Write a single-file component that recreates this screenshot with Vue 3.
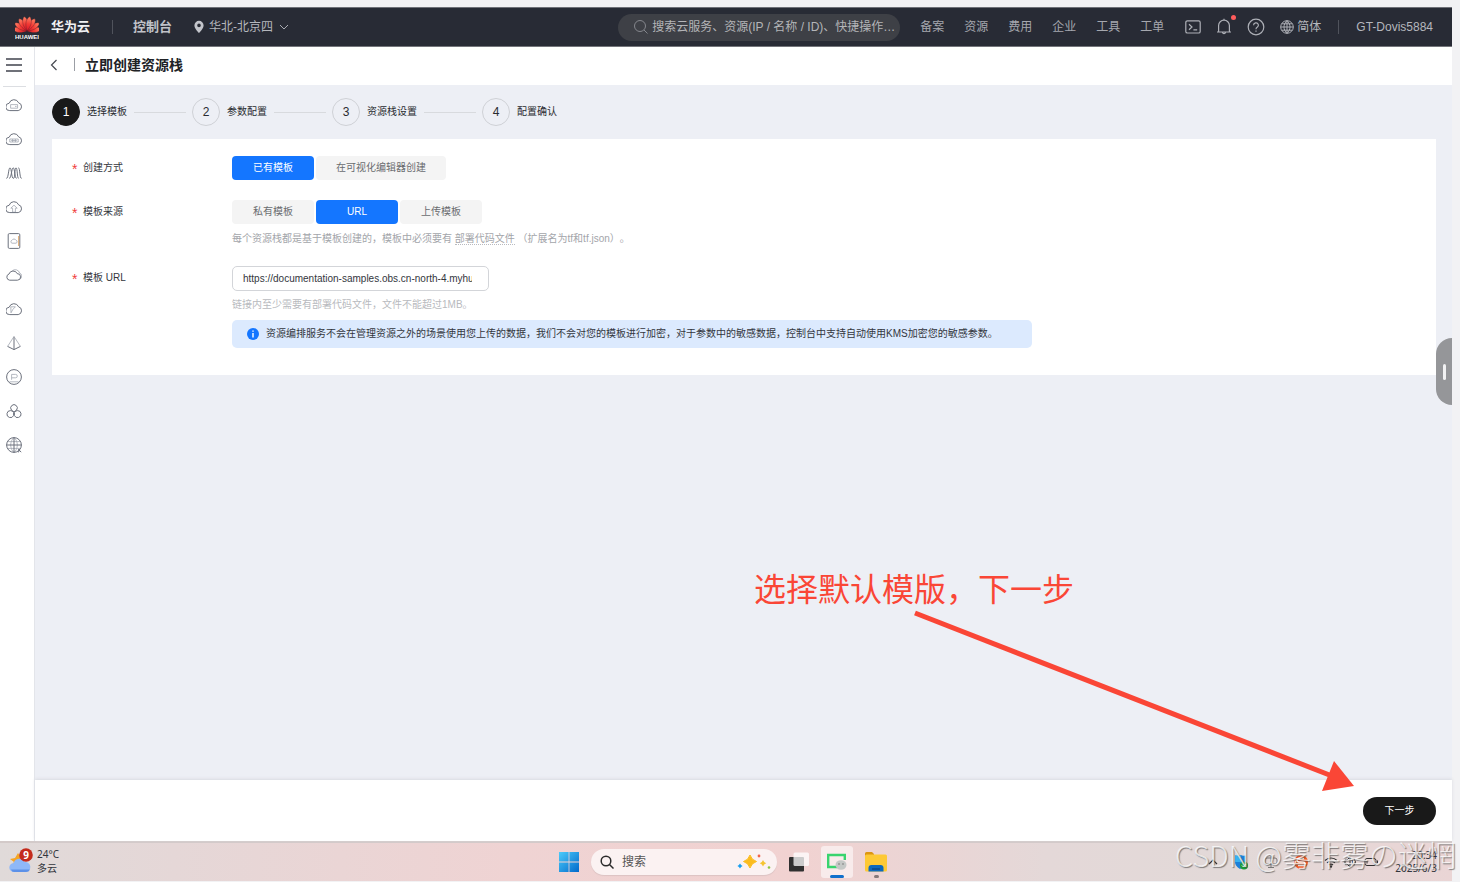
<script setup>
import { ref } from 'vue'

const navLinks = ['备案', '资源', '费用', '企业', '工具', '工单']
const steps = ['选择模板', '参数配置', '资源栈设置', '配置确认']
const createModes = ['已有模板', '在可视化编辑器创建']
const sources = ['私有模板', 'URL', '上传模板']

const cloud = 'M3.8 13.6A3.7 3.7 0 0 1 3.2 6.2 5 5 0 0 1 12.6 5.8 4 4 0 0 1 12.2 13.6Z'
const services = [
  { name: '弹性云服务器', paths: [cloud], faint: ['M4.6 7.6h7v3.6H4.600zM9 9.400h1.600'] },
  { name: '裸金属服务器', paths: [cloud], faint: ['M3.800 8h8.400v3H3.800zM5.200 9.500h5.600M6.600 8v3M9.400 8v3'] },
  { name: '弹性伸缩', paths: ['M.4 13.400C2.600 13.400 2.400 2.800 4 2.800S5.400 13.400 7.400 13.400 8.400 2.800 10 2.800 11 13.400 12.600 13.400', 'M3.200 13.400C5.400 13.400 5.600 2.800 7.200 2.800S8.600 13.400 10.600 13.400M12.400 2.800c1.800 0 1 10.600 3.200 10.600'], faint: [] },
  { name: '云备份', paths: [cloud], faint: ['M8 6.200 11.200 9.200H9.400v4H6.600v-4H4.800z'] },
  { name: '云硬盘', paths: ['M3.400.6h9.200a1.200 1.200 0 0 1 1.200 1.200v12.400a1.200 1.200 0 0 1-1.200 1.200H3.400a1.200 1.200 0 0 1-1.200-1.200V1.800A1.200 1.200 0 0 1 3.400.6z'], faint: ['M6 10.200a1.500 1.500 0 0 1 0-2.900 2.200 2.200 0 0 1 4 0 1.500 1.500 0 0 1 0 2.900z'], warm: 'M12.600 3v10' },
  { name: '虚拟私有云', paths: ['M3.600 13.200A3.200 3.200 0 0 1 3 7 4.400 4.400 0 0 1 11.200 6.600 3.300 3.300 0 0 1 11.400 13.200Z'], faint: ['M6.400 3.600A4.600 4.600 0 0 1 13.600 6 3.400 3.400 0 0 1 14.200 12'] },
  { name: '内容分发', paths: [cloud], faint: ['M4.800 5.800h4.600L7 8.200 5 11.800z'] },
  { name: '弹性负载均衡', paths: ['M8 1.400v13', 'M1.600 11.400 8 14.600l6.400-3.200'], faint: ['M7.400 2.400 1.600 11.400M8.600 2.400l5.800 9'] },
  { name: '弹性公网', paths: ['M8 .6a7.400 7.400 0 1 1 0 14.800A7.400 7.400 0 0 1 8 .6z'], faint: ['M5.600 10.800V5.400h4a1.700 1.700 0 0 1 0 3.400h-4M3.400 12.800h9.200'] },
  { name: '容器', paths: ['M5.400 7A3.300 3.300 0 1 1 10.600 7L8 9z', 'M4.400 7.600a3.500 3.500 0 1 0 3.200 5V9.400A3.600 3.600 0 0 0 4.400 7.600z', 'M11.600 7.600a3.500 3.500 0 1 1-3.200 5V9.400a3.600 3.600 0 0 1 3.200-1.800z'], faint: [] },
  { name: '域名', paths: ['M8 .6a7.400 7.400 0 1 1 0 14.800A7.400 7.400 0 0 1 8 .6z', 'M8 .6v14.800M.6 8h14.800', 'M12.200 12l3 3.200M12.400 15.400l1.200-3.200'], faint: ['M8 .6C3.600 4 3.600 12 8 15.400M8 .6c4.400 3.400 4.400 11.400 0 14.800M2 4.600h12M2 11.400h12'] }
]

const petals = [-82, 82, -57, 57, -33, 33, -11, 11]
const createMode = ref('已有模板')
const source = ref('URL')
const url = ref('https://documentation-samples.obs.cn-north-4.myhuaweicloud.com')
</script>

<template>
  <div class="page" lang="zh-CN">
    <header class="topbar">
      <a class="brand" href="#">
        <svg class="logo" width="24" height="26" viewBox="0 0 24 26" aria-label="HUAWEI">
          <defs>
            <linearGradient id="petal" x1="0" y1="0" x2="0" y2="1">
              <stop offset="0" stop-color="#ff8466" />
              <stop offset=".5" stop-color="#f23a35" />
              <stop offset="1" stop-color="#dc1428" />
            </linearGradient>
          </defs>
          <path v-for="p in petals" :key="p" d="M12 17C8.400 11 7.600 6 10.600 2Q12 0 13.400 2C16.400 6 15.600 11 12 17Z" fill="url(#petal)" stroke="#4a2029" stroke-width=".4" :transform="`rotate(${p} 12 17) translate(2.400 1.700) scale(.8 .9)`" />
          <text x="12" y="25" text-anchor="middle" class="logo-text">HUAWEI</text>
        </svg>
        <span>华为云</span>
      </a>
      <span class="rule brand-rule"></span>
      <a class="console" href="#">控制台</a>
      <button class="region" type="button">
        <svg width="10" height="14" viewBox="0 0 10 14"><path fill-rule="evenodd" d="M5 .8a4.600 4.600 0 0 1 4.600 4.600C9.600 8.500 5 13 5 13S.4 8.500.4 5.400A4.600 4.600 0 0 1 5 .8zM5 3.600a1.800 1.800 0 1 0 0 3.600 1.800 1.800 0 0 0 0-3.600z" fill="#c3c5cb" /></svg>
        <span>华北-北京四</span>
        <svg width="10" height="8" viewBox="0 0 10 8"><path d="M1 2l4 4 4-4" fill="none" stroke="#a9abb2" /></svg>
      </button>
      <label class="search">
        <svg width="16" height="16" viewBox="0 0 16 16" fill="none" stroke="#85878d"><circle cx="7" cy="7" r="5.500" /><path d="M11 11l3.500 3.500" /></svg>
        <input type="text" aria-label="搜索" placeholder="搜索云服务、资源(IP / 名称 / ID)、快捷操作…" />
      </label>
      <nav class="links">
        <a v-for="l in navLinks" :key="l" href="#">{{ l }}</a>
      </nav>
      <div class="tools">
        <button type="button" aria-label="命令行">
          <svg width="16" height="16" viewBox="0 0 16 16" fill="none" stroke="#aeb0b7" stroke-width="1.200"><rect x=".8" y="1.800" width="14.400" height="12.200" rx="1.600" /><path d="M4 5.200l3 2.800-3 2.800M8.400 10.800h3.800" /></svg>
        </button>
        <button type="button" class="bell" aria-label="消息">
          <svg width="16" height="18" viewBox="0 0 16 18" fill="none" stroke="#aeb0b7" stroke-width="1.200"><path d="M1 14h14M2.600 14V7.600a5.400 5.400 0 0 1 10.800 0V14M8 2.200V.8M6.400 14.400a1.700 1.700 0 0 0 3.200 0" /></svg>
          <i class="dot"></i>
        </button>
        <button type="button" aria-label="帮助">
          <svg width="18" height="18" viewBox="0 0 18 18" fill="none" stroke="#aeb0b7" stroke-width="1.200"><circle cx="9" cy="9" r="7.800" /><path d="M6.600 7.300a2.400 2.400 0 1 1 3.600 2Q9 10 9 11.200M9 12.400v1.400" /></svg>
        </button>
        <button type="button" class="lang">
          <svg width="14" height="14" viewBox="0 0 14 14" fill="none" stroke="#aeb0b7"><circle cx="7" cy="7" r="6.300" /><path d="M7 .7v12.600M.7 7h12.600M7 .7C3 4 3 10 7 13.300M7 .7c4 3.300 4 9.300 0 12.600M1.700 3.800h10.600M1.700 10.200h10.600" /></svg>
          <span>简体</span>
        </button>
      </div>
      <span class="rule"></span>
      <a class="user" href="#">GT-Dovis5884</a>
    </header>

    <div class="body">
      <aside class="side">
        <button type="button" class="burger" aria-label="菜单">
          <svg width="16" height="16" viewBox="0 0 16 16"><path d="M0 2h16M0 8h16M0 14h16" stroke="#40434d" stroke-width="1.600" /></svg>
        </button>
        <a v-for="s in services" :key="s.name" href="#" :aria-label="s.name">
          <svg width="16" height="16" viewBox="0 0 16 16" fill="none" stroke-linejoin="round">
            <path v-for="d in s.faint" :key="d" :d="d" stroke="#a2a7b1" stroke-width=".8" />
            <path v-for="d in s.paths" :key="d" :d="d" stroke="#6c717d" />
            <path v-if="s.warm" :d="s.warm" stroke="#e0ad74" />
          </svg>
        </a>
      </aside>

      <div class="content">
        <div class="titlebar">
          <button type="button" aria-label="返回">
            <svg width="8" height="12" viewBox="0 0 8 12"><path d="M6.500 1l-5 5 5 5" fill="none" stroke="#454850" stroke-width="1.200" /></svg>
          </button>
          <span class="title-rule"></span>
          <h1>立即创建资源栈</h1>
        </div>

        <main class="main">
          <ol class="steps">
            <li v-for="(s, i) in steps" :key="s" :class="{ active: i === 0 }">
              <b>{{ i + 1 }}</b><span>{{ s }}</span>
            </li>
          </ol>

          <form class="card" @submit.prevent>
            <div class="row">
              <span id="mode" class="label"><i>*</i>创建方式</span>
              <div class="segments" role="group" aria-labelledby="mode">
                <button v-for="m in createModes" :key="m" type="button" :class="{ on: m === createMode }" @click="createMode = m">{{ m }}</button>
              </div>
            </div>
            <div class="row">
              <span id="source" class="label"><i>*</i>模板来源</span>
              <div>
                <div class="segments" role="group" aria-labelledby="source">
                  <button v-for="m in sources" :key="m" type="button" :class="{ on: m === source }" @click="source = m">{{ m }}</button>
                </div>
                <p class="hint">每个资源栈都是基于模板创建的，模板中必须要有 <a href="#">部署代码文件</a> （扩展名为tf和tf.json）。</p>
              </div>
            </div>
            <div class="row">
              <label class="label" for="url"><i>*</i>模板 URL</label>
              <div>
                <input id="url" v-model="url" class="url" type="text" />
                <p class="hint light">链接内至少需要有部署代码文件，文件不能超过1MB。</p>
                <p class="notice">
                  <svg width="12" height="12" viewBox="0 0 12 12"><circle cx="6" cy="6" r="6" fill="#1476ff" /><path d="M6 2.400v1.400M6 5v4.400" stroke="#fff" stroke-width="1.400" /></svg>
                  <span>资源编排服务不会在管理资源之外的场景使用您上传的数据，我们不会对您的模板进行加密，对于参数中的敏感数据，控制台中支持自动使用KMS加密您的敏感参数。</span>
                </p>
              </div>
            </div>
          </form>
        </main>

        <footer class="actions">
          <button type="button">下一步</button>
        </footer>
      </div>
      <button type="button" class="handle" aria-label="展开"><i></i></button>
    </div>

    <footer class="taskbar">
      <div class="weather">
        <svg width="24" height="26" viewBox="0 0 24 26">
          <path d="M9 5l2 3 4 1v8H3l2-3-4-3 5-1z" fill="#f5a524" />
          <path d="M5 24a4.500 4.500 0 0 1-.4-9 6 6 0 0 1 11-1A5 5 0 0 1 17 24z" fill="#8fb8f7" />
          <path d="M2 21.500Q3 24 5 24h12q3 0 4-2.500z" fill="#5d91e8" />
          <circle cx="17" cy="7" r="6.800" fill="#c42b1c" />
          <text x="17" y="11" text-anchor="middle" class="badge">9</text>
        </svg>
        <span>24°C<br />多云</span>
      </div>
      <div class="apps">
        <button type="button" aria-label="开始">
          <svg width="20" height="20" viewBox="0 0 20 20">
            <defs><linearGradient id="win" x1="0" y1="0" x2="1" y2="1"><stop offset="0" stop-color="#4bcbfa" /><stop offset="1" stop-color="#0169cb" /></linearGradient></defs>
            <path d="M0 0h9.600v9.600H0zM10.400 0H20v9.600h-9.600zM0 10.400h9.600V20H0zM10.400 10.400H20V20h-9.600z" fill="url(#win)" />
          </svg>
        </button>
        <label class="task-search">
          <svg width="14" height="14" viewBox="0 0 14 14" fill="none" stroke="#2b2b2b" stroke-width="1.500"><circle cx="6" cy="6" r="4.800" /><path d="M9.500 9.500l4 4" /></svg>
          <input type="text" aria-label="任务栏搜索" placeholder="搜索" />
          <svg width="34" height="18" viewBox="0 0 34 18">
            <path d="M13 2q1.500 5 6.500 6.500-5 1.500-6.500 6.500-1.500-5-6.500-6.500Q11.500 7 13 2z" fill="#fbbc1e" stroke="#fbbc1e" stroke-linejoin="round" />
            <path d="M26 7q.8 2.500 3.200 3.300-2.400.8-3.200 3.200-.8-2.400-3.200-3.200Q25.200 9.500 26 7z" fill="#f5c431" />
            <path d="M3 10.500q.8 1.800 2.600 2.500-1.800.8-2.600 2.600-.8-1.800-2.600-2.600Q2.200 12.300 3 10.500z" fill="#1a9ff0" />
            <circle cx="22" cy="3" r="1.400" fill="#f2664b" /><circle cx="32" cy="14.500" r="1.300" fill="#8cc63f" />
          </svg>
        </label>
        <button type="button" aria-label="任务视图">
          <svg width="20" height="20" viewBox="0 0 20 20"><rect y="5" width="15" height="14.500" rx="1" fill="#303030" /><rect x="4.500" y=".5" width="15.500" height="13.500" rx="1.500" fill="#fff" opacity=".75" /></svg>
        </button>
        <button type="button" class="current" aria-label="微信">
          <svg width="22" height="20" viewBox="0 0 22 20"><path d="M11 15H2.200V3h16.600v5" fill="none" stroke="#38d46e" stroke-width="2.400" /><ellipse cx="15" cy="13" rx="5.500" ry="4.800" fill="#c4c8c6" /><circle cx="13" cy="12" r=".8" fill="#777" /><circle cx="17" cy="12" r=".8" fill="#777" /></svg>
          <i></i>
        </button>
        <button type="button" class="files" aria-label="文件资源管理器">
          <svg width="22" height="20" viewBox="0 0 22 20"><path d="M0 1.500A1.500 1.500 0 0 1 1.500 0H7l2 2v5H0z" fill="#dc9610" /><rect y="2.500" width="22" height="17" rx="1.500" fill="#fdc935" /><path d="M3.500 19.500V16a3 3 0 0 1 3-3h9a3 3 0 0 1 3 3v3.500z" fill="#0b68bd" /><path d="M7 17h8" stroke="#073f7c" stroke-width="1.200" /></svg>
          <i></i>
        </button>
      </div>
      <div class="tray">
        <svg width="10" height="10" viewBox="0 0 10 10"><path d="M1 7l4-4 4 4" fill="none" stroke="#333" stroke-width="1.200" /></svg>
        <svg width="14" height="16" viewBox="0 0 14 16"><path d="M1 1.500Q6 2 7 1q1 1 5 .5V8q0 5-6 7-5-3-5-7z" fill="#1c80d8" /><path d="M1 1.500Q6 2 7 1v7H1z" fill="#37b2f2" /><circle cx="10" cy="11.500" r="4" fill="#1b9b38" /><path d="M8 11.500l1.500 1.500 2.500-3" stroke="#fff" fill="none" /></svg>
        <svg width="14" height="14" viewBox="0 0 14 14" fill="none" stroke="#777"><rect x="1" y="3" width="12" height="6" rx="2" /><path d="M7 1v11M4 12.500h6" /></svg>
        <svg width="14" height="14" viewBox="0 0 14 14"><circle cx="7" cy="7" r="7" fill="#f15a24" /><path d="M10 3.500H5q-2 0-2 1.700T5 7h4q2 0 2 1.800t-2 1.700H4" stroke="#fff" stroke-width="1.500" fill="none" /></svg>
        <div class="status">
          <svg width="14" height="12" viewBox="0 0 14 12" fill="none" stroke="#333" stroke-width="1.200"><path d="M1 4.500a8.500 8.500 0 0 1 12 0M3 6.800a5.600 5.600 0 0 1 8 0M5 9a2.800 2.800 0 0 1 4 0" /><circle cx="7" cy="10.500" r=".6" /></svg>
          <svg width="14" height="12" viewBox="0 0 14 12" fill="none" stroke="#333"><path d="M1 4v4h2l3 3V1L3 4zM8 4q1.500 2 0 4M10 2.500q3 3.500 0 7" /></svg>
          <svg width="15" height="12" viewBox="0 0 15 12" fill="none" stroke="#333"><rect x="1" y="2.500" width="11" height="7" rx="2" /><path d="M13.500 4.500v3M3 4.500v3" /></svg>
        </div>
        <time>20:34<br />2025/6/3</time>
      </div>
    </footer>

    <div class="note">选择默认模版，下一步</div>
    <svg class="arrow" width="440" height="180" viewBox="0 0 440 180">
      <path d="M1 3L418 166" stroke="#fa4636" stroke-width="5" />
      <path d="M420 151L440 176L408 181Z" fill="#fa4636" />
    </svg>
    <div class="watermark">CSDN @雾非雾の迷惘</div>
  </div>
</template>

<style>
body { margin: 0; overflow: hidden; }
</style>

<style scoped>
.page, .page * { box-sizing: border-box; }
.page {
  position: relative;
  display: flex;
  flex-direction: column;
  min-height: 100vh;
  padding: 7px 8px 1px 0;
  overflow: hidden;
  background: #f2f2f4;
  color: #33363d;
  font: 10px/16px "Liberation Sans", "Noto Sans CJK SC", sans-serif;
  text-spacing-trim: space-all;
}
button { padding: 0; border: 0; background: none; color: inherit; font: inherit; cursor: pointer; }
input { font: inherit; color: inherit; min-width: 0; outline: 0; }
a { color: inherit; text-decoration: none; }
svg { display: block; flex: none; }
i { font-style: normal; }
p, h1, ol { margin: 0; padding: 0; }

.topbar {
  display: flex;
  align-items: center;
  height: 40px;
  padding: 0 19px 0 15px;
  border-top: 1px solid #6f7178;
  border-bottom: 1px solid #74757b;
  background: #282b35;
  color: #b5b7bd;
  font-size: 12px;
}
.brand { display: flex; align-items: center; gap: 12px; color: #f0f1f3; font-size: 13px; font-weight: bold; }
.logo-text { fill: #fff; font: bold 6px "Liberation Sans", sans-serif; }
.rule { width: 1px; height: 14px; background: #50535c; }
.brand-rule { margin: 0 20px 0 22px; }
.console { font-size: 13px; font-weight: bold; color: #c0c2c8; }
.region { display: flex; align-items: center; gap: 5px; margin-left: 22px; }
.region svg:last-child { margin-left: 1px; }
.search {
  display: flex;
  align-items: center;
  gap: 3px;
  width: 282px;
  height: 27px;
  margin-left: auto;
  padding: 0 2px 0 15px;
  border-radius: 14px;
  background: #3e4046;
}
.search input { flex: 1; padding: 0; border: 0; background: none; text-overflow: ellipsis; }
.search input::placeholder { color: #b4b5b8; opacity: 1; }
.links { display: flex; gap: 20px; margin: 0 21px 0 20px; color: #a5a7ae; }
.tools { display: flex; align-items: center; gap: 15px; margin-right: 17px; }
.bell { position: relative; }
.dot { position: absolute; top: -3px; right: -4px; width: 5px; height: 5px; border-radius: 50%; background: #ff5c5c; }
.lang { display: flex; align-items: center; gap: 3px; }
.user { margin-left: 17px; }

.body { position: relative; display: flex; flex: 1; }
.side {
  display: flex;
  flex: none;
  flex-direction: column;
  width: 35px;
  border-right: 1px solid #e3e5ea;
  background: #fff;
}
.side > * { display: flex; align-items: center; height: 34px; padding-left: 6px; }
.side .burger { height: 40px; margin: 0 8px 1px 3px; padding: 0 0 3px 3px; border-bottom: 1px solid #dcdee2; }
.content { display: flex; flex: 1; flex-direction: column; min-width: 0; }
.titlebar { display: flex; align-items: center; height: 38px; padding: 0 15px 3px; background: #fff; color: #202226; }
.title-rule { width: 1px; height: 13px; margin: 0 10px 0 16px; background: #9b9ea5; }
h1 { font-size: 14px; line-height: 20px; }
.main { flex: 1; padding: 13px 16px 16px 17px; background: #edeff5; }
.steps { display: flex; list-style: none; gap: 6px; }
.steps li { display: flex; align-items: center; gap: 7px; color: #292b30; }
.steps li:not(:last-child)::after { content: ""; width: 52px; height: 1px; background: #d8dade; }
.steps b {
  display: grid;
  place-items: center;
  width: 28px;
  height: 28px;
  border: 1px solid #cfd1d6;
  border-radius: 50%;
  font-size: 12px;
  font-weight: normal;
}
.steps .active b { border-color: #191919; background: #191919; color: #fff; }

.card { display: flex; flex-direction: column; gap: 20px; margin-top: 13px; padding: 17px 20px 27px; background: #fff; }
.row { display: grid; grid-template-columns: 160px 1fr; }
.label { line-height: 24px; }
.label i { display: inline-block; width: 11px; color: #f0403c; font-size: 14px; line-height: 16px; vertical-align: -3px; }
.segments { display: flex; gap: 2px; }
.segments button { min-width: 82px; height: 24px; padding: 0 20px; border-radius: 4px; background: #f4f4f4; color: #6a6c70; }
.segments .on { background: #1476ff; color: #fff; }
.hint { margin-top: 8px; color: #a3a5aa; line-height: 14px; }
.hint a { border-bottom: 1px dotted #b9bbc0; }
.url { display: block; width: 257px; height: 25px; padding: 0 16px 0 10px; border: 1px solid #d3d5d9; border-radius: 5px; }
.light { margin-top: 7px; color: #b8babe; }
.notice {
  display: flex;
  align-items: center;
  gap: 7px;
  width: 800px;
  max-width: 100%;
  margin-top: 8px;
  padding: 6px 15px;
  border-radius: 5px;
  background: #dceafe;
  color: #33363d;
}

.actions { display: flex; align-items: center; justify-content: flex-end; height: 61px; padding: 0 16px; background: #fff; box-shadow: 0 -1px 3px #d9dbe1; }
.actions button { width: 73px; height: 28px; border-radius: 14px; background: #191919; color: #fff; }
.handle { position: absolute; top: 291px; right: 0; display: grid; place-items: center; width: 16px; height: 67px; border-radius: 16px 0 0 16px; background: #959699; }
.handle i { width: 3px; height: 16px; border-radius: 2px; background: #f2f2f3; }

.taskbar {
  display: grid;
  grid-template-columns: 1fr auto 1fr;
  align-items: center;
  height: 40px;
  padding: 0 15px 0 9px;
  border-top: 2px solid #d3cac9;
  background: linear-gradient(90deg, #e0dad9, #e5d7d7 12%, #efd3d3 35%, #f1d2d1 55%, #e4d8d8 72%, #e2d9d8 85%, #ead5d5);
}
.weather { display: flex; align-items: center; gap: 4px; padding-bottom: 3px; font: 10px/14px "Noto Sans", "Noto Sans CJK SC", sans-serif; }
.badge { fill: #fff; font: bold 10px "Noto Sans", sans-serif; }
.apps { display: flex; align-items: center; gap: 12px; }
.task-search { display: flex; align-items: center; gap: 8px; width: 186px; height: 26px; padding: 0 6px 0 9px; border-radius: 13px; background: #fbf2f2; box-shadow: 0 1px 1px #dcc3c3; font-size: 12px; }
.task-search input { flex: 1; width: 0; padding: 0; border: 0; background: none; }
.task-search input::placeholder { color: #555; opacity: 1; }
.current, .files { position: relative; display: grid; place-items: center; height: 32px; }
.current { width: 32px; border-radius: 3px; background: #f8ebeb; }
.current i, .files i { position: absolute; bottom: 0; height: 3px; border-radius: 2px; }
.current i { width: 14px; background: #1070cc; }
.files i { width: 5px; background: #86797a; }
.tray { display: flex; align-items: center; justify-content: flex-end; gap: 16px; }
.status { display: flex; align-items: center; gap: 6px; }
.tray time { text-align: right; font: 10px/13px "Noto Sans", sans-serif; }

.note { position: absolute; right: 386px; bottom: 271px; color: #fa4636; font: 32px/48px "Noto Sans CJK SC", sans-serif; white-space: nowrap; }
.arrow { position: absolute; right: 106px; bottom: 92px; overflow: visible; }
.watermark {
  position: absolute;
  right: 4px;
  bottom: 8px;
  color: rgba(255, 255, 255, .75);
  font: 300 29px/40px "Noto Sans CJK SC", sans-serif;
  text-shadow: 1px 1px 1px rgba(70, 70, 70, .65);
  white-space: nowrap;
}
</style>
